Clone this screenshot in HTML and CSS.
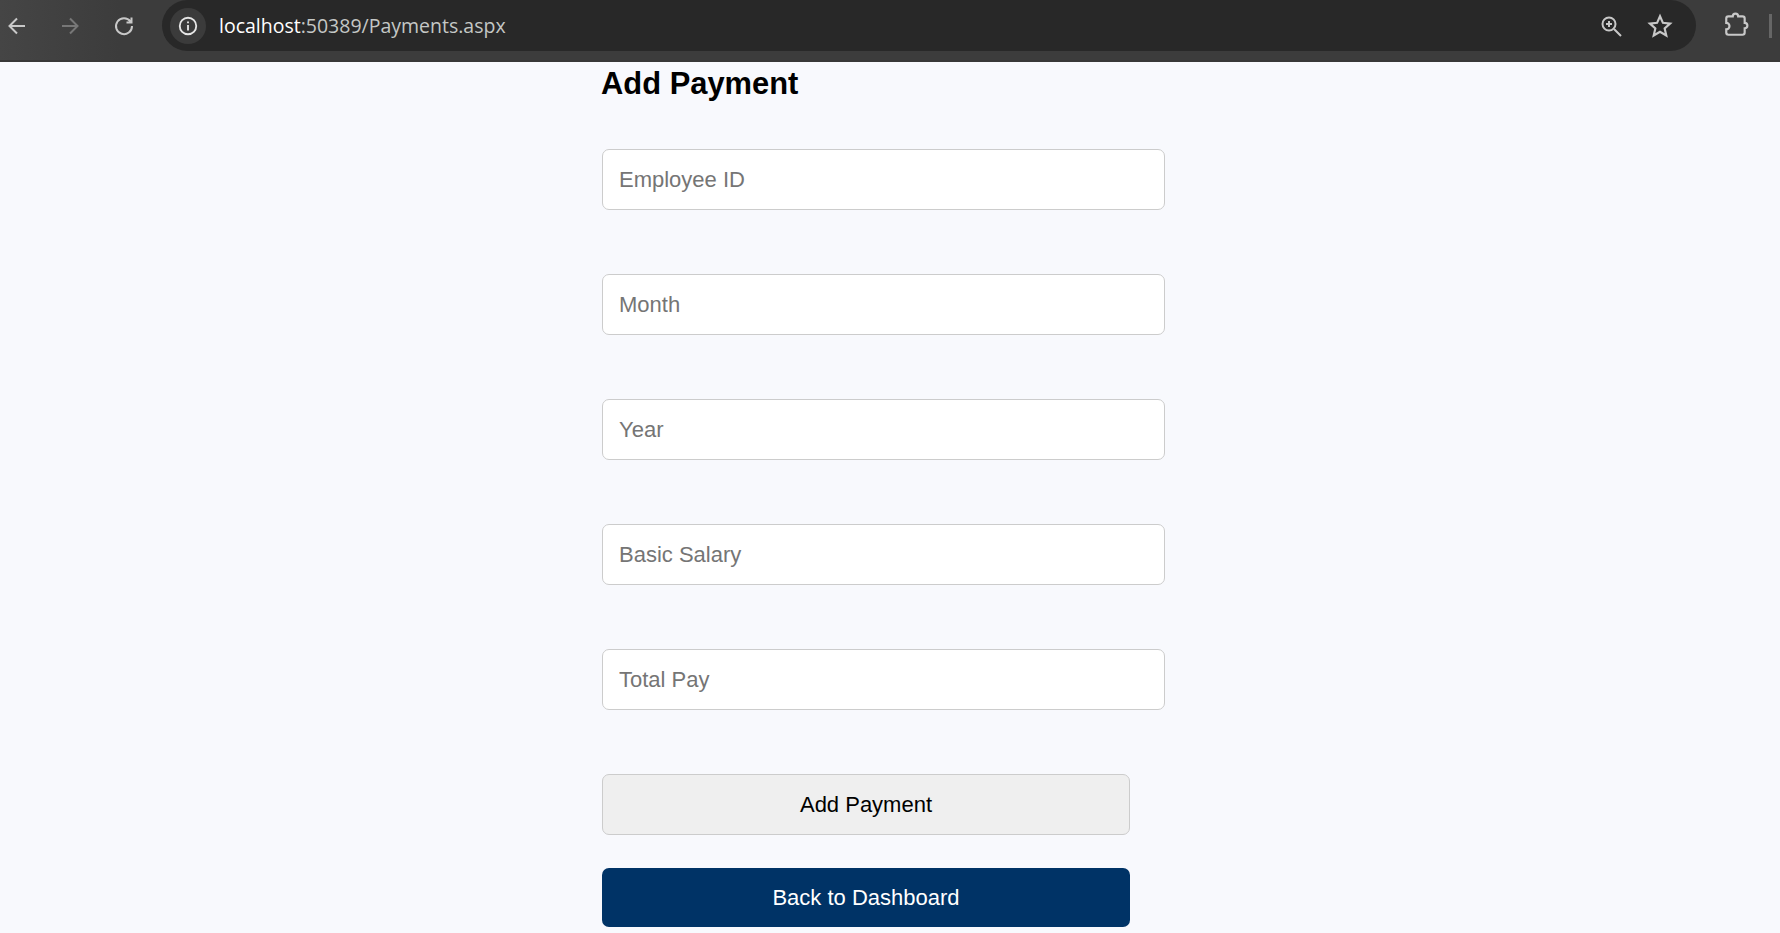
FILE: index.html
```html
<!DOCTYPE html>
<html lang="en">
<head>
<meta charset="utf-8">
<title>Payments</title>
<link rel="stylesheet" href="styles.css">
</head>
<body>
<header class="toolbar">
  <div class="nav">
    <svg class="ico" viewBox="0 0 24 24"><path d="M20 12H5M12 4.500 4.500 12l7.500 7.500"/></svg>
    <svg class="ico dim" viewBox="0 0 24 24"><path d="M4 12h15M12 4.500l7.500 7.500-7.500 7.500"/></svg>
    <svg class="ico" viewBox="0 0 24 24"><path d="M18.500 7.500A8 8 0 1 0 20 12M19.500 3.500v5h-5"/></svg>
  </div>
  <div class="omnibox">
    <span class="info"><svg viewBox="0 0 24 24"><circle cx="12" cy="12" r="9"/><path d="M12 11v6M12 7v2"/></svg></span>
    <span class="url"><span class="host">localhost</span>:50389/Payments.aspx</span>
    <svg class="ico zoom" viewBox="0 0 24 24"><circle cx="10" cy="10" r="6.500"/><path d="M15 15l7 7M10 7v6M7 10h6"/></svg>
    <svg class="ico star" viewBox="0 0 24 24"><path d="M12 3l2.700 6.100 6.600.7-5 4.400 1.500 6.500L12 17.300l-5.800 3.400 1.500-6.500-5-4.400 6.600-.7z"/></svg>
  </div>
  <svg class="ico ext" viewBox="0 0 24 24"><path d="M5 4h4a2.500 2.500 0 0 1 5 0h4a2 2 0 0 1 2 2v4a2.500 2.500 0 0 1 0 5v4a2 2 0 0 1-2 2H5a2 2 0 0 1-2-2v-3a3 3 0 0 0 0-6V6a2 2 0 0 1 2-2z"/></svg>
  <span class="divider"></span>
</header>
<main class="form">
  <h2 class="title">Add Payment</h2>
  <input class="field" placeholder="Employee ID">
  <input class="field" placeholder="Month">
  <input class="field" placeholder="Year">
  <input class="field" placeholder="Basic Salary">
  <input class="field" placeholder="Total Pay">
  <button class="btn add">Add Payment</button>
  <a class="btn back" href="#">Back to Dashboard</a>
</main>
</body>
</html>
```
FILE: styles.css
```css
* { box-sizing: border-box; }
html, body { margin: 0; height: 100%; overflow: hidden; }
body { background: #f8f9fd; font-family: "Liberation Sans", Arial, sans-serif; }
.toolbar {
  height: 62px;
  display: flex;
  align-items: flex-start;
  background: linear-gradient(90deg, #454545 0, #3c3c3c 120px, #3c3c3c 100%);
  border-bottom: 2px solid #383838;
}
.ico { fill: none; stroke: #c8c8c8; stroke-width: 2; width: 24px; height: 24px; flex: none; }
.nav { display: flex; gap: 29px; padding: 14px 0 0 5px; width: 162px; }
.nav .dim { stroke: #777; }
.nav .ico:last-child { margin-left: 1px; }
.omnibox {
  width: 1534px;
  height: 51px;
  background: #282828;
  border-radius: 26px;
  display: flex;
  align-items: center;
  padding-left: 8px;
}
.info {
  width: 36px; height: 36px; border-radius: 50%;
  background: #3b3b3b;
  display: flex; align-items: center; justify-content: center;
}
.info svg { width: 22px; height: 22px; fill: none; stroke: #e6e6e6; stroke-width: 2; }
.url {
  margin-left: 13px;
  flex: 1;
  font: 19.500px "Open Sans", sans-serif;
  color: #c4c7c5;
}
.host { color: #fff; }
.zoom { width: 24px; height: 24px; margin-right: 24px; }
.star { width: 26px; height: 26px; margin-right: 23px; }
.ext { width: 26px; height: 26px; margin: 12px 0 0 27px; }
.divider { width: 3px; height: 24px; background: #666; margin: 14px 0 0 20px; }

.form {
  width: 563px;
  margin-left: 602px;
  display: flex;
  flex-direction: column;
  align-items: flex-start;
}
.title {
  margin: 0 0 25px -1px;
  height: 62px;
  font-size: 30.900px;
  line-height: 40px;
  padding-top: 2px;
  color: #000;
}
.field {
  width: 100%;
  height: 61px;
  margin-bottom: 64px;
  padding: 0 16px;
  border: 1.500px solid #ccc;
  border-radius: 7px;
  background: #fff;
  font: 22px "Liberation Sans", Arial, sans-serif;
  outline: none;
}
.field::placeholder { color: #757575; opacity: 1; }
.btn {
  width: 528px;
  display: flex;
  align-items: center;
  justify-content: center;
  border-radius: 7px;
  font: 22px "Liberation Sans", Arial, sans-serif;
  text-decoration: none;
}
.add {
  height: 61px;
  margin-bottom: 33px;
  background: #efefef;
  border: 1.500px solid #ccc;
  color: #000;
}
.back { height: 59px; background: #003366; color: #fff; }
```
